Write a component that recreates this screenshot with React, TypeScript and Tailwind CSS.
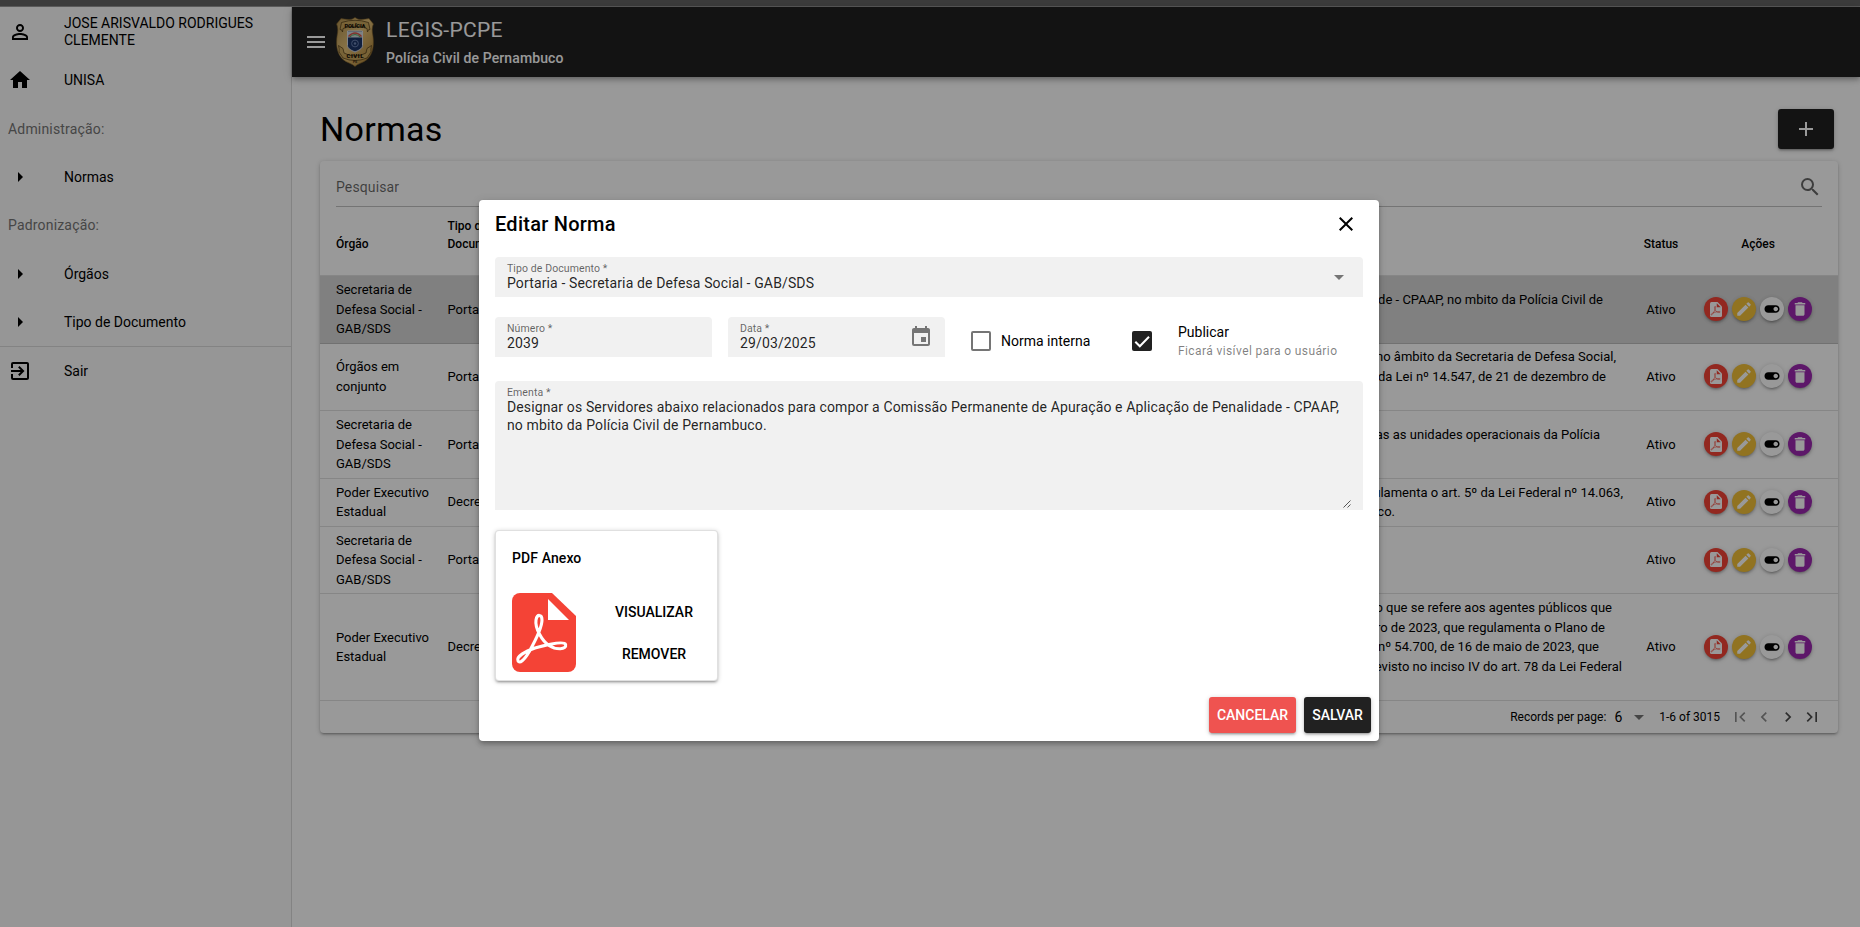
import type { ReactNode } from 'react';
import {
  MdAdd,
  MdArrowDropDown,
  MdArrowRight,
  MdChevronLeft,
  MdChevronRight,
  MdClose,
  MdDelete,
  MdEdit,
  MdEvent,
  MdExitToApp,
  MdFirstPage,
  MdHome,
  MdLastPage,
  MdMenu,
  MdPersonOutline,
  MdSearch,
  MdToggleOn,
} from 'react-icons/md';

function PdfIcon({ className, file, mark }: { className: string; file: string; mark: string }) {
  return (
    <svg viewBox="0 0 64 79" className={className} fill="none">
      <path d="M8 0H40L64 23V71a8 8 0 0 1-8 8H8a8 8 0 0 1-8-8V8a8 8 0 0 1 8-8Z" fill={file} />
      <path d="M36 6V27H57Z" fill={mark} />
      <path
        d="M6 67.8C4 63.5 13 58.5 23 55C34 52 52 47.500 53.6 51.5C55 57 44 57 37 52.5C30 48 22.8 35 24 27C25 20.8 30 21 30 27C30 36 22 50 17 59C12 67.5 7.5 71 6 67.8Z"
        stroke={mark}
        strokeWidth="3.1"
        strokeLinejoin="round"
      />
    </svg>
  );
}

function Crest() {
  return (
    <svg viewBox="0 0 38 50" className="h-[50px] w-[38px] shrink-0">
      <defs>
        <linearGradient id="gold" x1="0" y1="0" x2="1" y2="1">
          <stop offset="0" stopColor="#b08f4e" />
          <stop offset="0.45" stopColor="#e3c078" />
          <stop offset="1" stopColor="#a5782b" />
        </linearGradient>
      </defs>
      <path
        d="M19 .6 22 2.2C26 3 30 2 33 1.6L37.4 7C35.8 11 36 14 36.8 18C38.4 28 37 37 31 42.5C27 46 21.5 46.5 19 49.6C16.500 46.500 11 46 7 42.500C1 37-.4 28 1.200 18C2 14 2.200 11 .6 7L5 1.600C8 2 12 3 16 2.200Z"
        fill="url(#gold)"
        stroke="#7d5f28"
        strokeWidth=".6"
      />
      <path d="M5.500 5.500Q19 1 32.500 5.500L34 12.500Q32 12 31.500 15L31 11.500Q19 7 7 11.500L6.500 15Q6 12 4 12.500Z" fill="#c9a55c" stroke="#4a3614" strokeWidth=".7" />
      <path d="M2.500 28.500 7 31.500 8 36Q19 42 30 36L31 31.500 35.500 28.500Q34.500 32 35 35L31 41Q19 46 7 41L3 35Q3.500 32 2.500 28.500Z" fill="#c9a55c" stroke="#4a3614" strokeWidth=".7" />
      <path d="M11.500 14H26.500V28.500C26.500 32 22 33.500 19 35C16 33.500 11.500 32 11.500 28.500Z" fill="#1c3568" stroke="#d9dde6" strokeWidth="1" />
      <path d="M12 14.500H26V20.500H12Z" fill="#cfd9dd" />
      <path d="M12.500 19.500Q19 12.500 25.500 19.500" fill="none" stroke="#d8564c" strokeWidth="1.400" />
      <path d="M13.500 20.300Q19 14.800 24.500 20.300" fill="none" stroke="#58a560" strokeWidth="1" />
      <circle cx="19" cy="26.500" r="3.400" fill="none" stroke="#6f86b5" strokeWidth=".9" />
      <circle cx="19" cy="26.500" r="1.200" fill="#6f86b5" />
      <text x="19" y="10.600" textAnchor="middle" fontSize="5.800" fontWeight="900" fontFamily="Roboto, sans-serif" fill="#120d04" textLength="21">POLÍCIA</text>
      <text x="19" y="41" textAnchor="middle" fontSize="6" fontWeight="900" fontFamily="Roboto, sans-serif" fill="#120d04" textLength="17">CIVIL</text>
      <text x="19" y="46" textAnchor="middle" fontSize="3.500" fontWeight="900" fontFamily="Roboto, sans-serif" fill="#3c2d10">PE</text>
    </svg>
  );
}

function NavItem({ icon, children }: { icon: ReactNode; children: ReactNode }) {
  return (
    <div className="flex h-12 items-center pl-2">
      <div className="flex w-14 shrink-0 text-[24px] text-black">{icon}</div>
      <div className="w-[215px] leading-[16.8px]">{children}</div>
    </div>
  );
}

function Sidebar() {
  return (
    <nav className="w-[292px] shrink-0 border-r border-[#dadada] bg-[#fafafa] pt-px text-[14px] text-black">
      <NavItem icon={<MdPersonOutline />}>JOSE ARISVALDO RODRIGUES CLEMENTE</NavItem>
      <NavItem icon={<MdHome />}>UNISA</NavItem>
      <div className="flex h-[49px] items-center pt-[2px] pl-2 tracking-[0.0125em] text-[#757575]">Administração:</div>
      <NavItem icon={<MdArrowRight />}>Normas</NavItem>
      <div className="flex h-[49px] items-center pl-2 tracking-[0.0125em] text-[#757575]">Padronização:</div>
      <NavItem icon={<MdArrowRight />}>Órgãos</NavItem>
      <NavItem icon={<MdArrowRight />}>Tipo de Documento</NavItem>
      <div className="h-px bg-[#dadada]" />
      <NavItem icon={<MdExitToApp />}>Sair</NavItem>
    </nav>
  );
}

interface Row {
  orgao: string[];
  tipo: string;
  height: string;
  lines: { text: string; pad: string }[];
  active?: boolean;
}

const SDS = ['Secretaria de', 'Defesa Social -', 'GAB/SDS'];
const PODER = ['Poder Executivo', 'Estadual'];

const rows: Row[] = [
  {
    orgao: SDS,
    tipo: 'Portaria',
    height: 'h-[68px]',
    active: true,
    lines: [
      { text: 'de - CPAAP, no mbito da Polícia Civil de', pad: 'pr-[23px]' },
      { text: '', pad: '' },
    ],
  },
  {
    orgao: ['Órgãos em', 'conjunto'],
    tipo: 'Portaria',
    height: 'h-[67px] pb-px',
    lines: [
      { text: 'no âmbito da Secretaria de Defesa Social,', pad: 'pr-[10px]' },
      { text: 'da Lei nº 14.547, de 21 de dezembro de', pad: 'pr-[20px]' },
      { text: '', pad: '' },
    ],
  },
  {
    orgao: SDS,
    tipo: 'Portaria',
    height: 'h-[68px]',
    lines: [
      { text: 'as as unidades operacionais da Polícia', pad: 'pr-[26px]' },
      { text: '', pad: '' },
    ],
  },
  {
    orgao: PODER,
    tipo: 'Decreto',
    height: 'h-[48px] pb-px',
    lines: [
      { text: 'regulamenta o art. 5º da Lei Federal nº 14.063,', pad: 'pr-[3px]' },
      { text: 'Pernambuco.', pad: 'pr-[231px]' },
    ],
  },
  { orgao: SDS, tipo: 'Portaria', height: 'h-[67px]', lines: [] },
  {
    orgao: PODER,
    tipo: 'Decreto',
    height: 'h-[107px]',
    lines: [
      { text: 'no que se refere aos agentes públicos que', pad: 'pr-[14px]' },
      { text: 'dezembro de 2023, que regulamenta o Plano de', pad: 'pr-[21px]' },
      { text: 'nº 54.700, de 16 de maio de 2023, que', pad: 'pr-[27px]' },
      { text: 'previsto no inciso IV do art. 78 da Lei Federal', pad: 'pr-[4px]' },
      { text: '', pad: '' },
    ],
  },
];

const round =
  'flex size-6 items-center justify-center rounded-full shadow-[0_1px_5px_rgba(0,0,0,0.2),0_2px_2px_rgba(0,0,0,0.14),0_3px_1px_-2px_rgba(0,0,0,0.12)]';

function TableRow({ row }: { row: Row }) {
  return (
    <div className={`flex items-center border-b border-black/12 text-[13px] leading-[19.5px] ${row.height} ${row.active ? 'bg-[#d6d6d6]' : ''}`}>
      <div className="w-[127.5px] shrink-0 pl-4">
        {row.orgao.map((l) => (
          <div key={l} className="whitespace-nowrap">{l}</div>
        ))}
      </div>
      <div className="w-[119.5px] shrink-0">{row.tipo}</div>
      <div className="w-[1059px] shrink-0 text-right whitespace-nowrap">
        {row.lines.map((l, i) => (
          <div key={i} className={`h-[19.5px] ${l.pad}`}>{l.text}</div>
        ))}
      </div>
      <div className="w-[70px] shrink-0 text-center">Ativo</div>
      <div className="mb-px ml-2 flex gap-1">
        <div className={`${round} bg-[#f44336]`}>
          <PdfIcon className="h-[15px] w-3" file="#fff" mark="#f44336" />
        </div>
        <div className={`${round} bg-[#f2c037] text-[18px] text-white`}><MdEdit /></div>
        <div className={`${round} bg-white text-[18px] text-black`}><MdToggleOn /></div>
        <div className={`${round} bg-[#9c27b0] text-[18px] text-white`}><MdDelete /></div>
      </div>
    </div>
  );
}

function MainPage() {
  return (
    <div className="flex min-w-0 flex-1 flex-col">
      <header className="flex h-[70px] shrink-0 items-center bg-[#212121] pl-3 text-white shadow-[0_2px_4px_-1px_rgba(0,0,0,0.2),0_4px_5px_rgba(0,0,0,0.14),0_1px_10px_rgba(0,0,0,0.12)]">
        <MdMenu className="mr-2 size-6" />
        <Crest />
        <div className="ml-3">
          <div className="text-[21px] leading-[30px] tracking-[0.015em]">LEGIS-PCPE</div>
          <div className="mt-[2px] text-[14px] leading-[22px] font-medium tracking-[0.00714em]">Polícia Civil de Pernambuco</div>
        </div>
      </header>
      <main className="flex flex-1 flex-col pt-8 pr-[22px] pl-7">
        <div className="flex h-10 items-center justify-between pr-1">
          <h1 className="text-[34px] leading-10 tracking-[0.00735em]">Normas</h1>
          <button className="flex h-10 w-14 items-center justify-center rounded-[3px] bg-[#212121] text-[24px] text-white shadow-[0_1px_5px_rgba(0,0,0,0.2),0_2px_2px_rgba(0,0,0,0.14),0_3px_1px_-2px_rgba(0,0,0,0.12)]">
            <MdAdd />
          </button>
        </div>
        <section className="mt-3 h-[572px] rounded bg-white shadow-[0_1px_5px_rgba(0,0,0,0.2),0_2px_2px_rgba(0,0,0,0.14),0_3px_1px_-2px_rgba(0,0,0,0.12)]">
          <div className="mx-4 flex h-[46px] items-center justify-between border-b border-black/24 pt-[6px] text-[14px] text-black/60">
            <span className="pt-[2px] tracking-[0.00937em]">Pesquisar</span>
            <MdSearch className="size-6" />
          </div>
          <div className="flex h-[69px] items-center border-b border-black/12 text-[12px] leading-[18px] font-medium">
            <div className="w-[127.5px] shrink-0 pl-4 pt-[5px]">Órgão</div>
            <div className="w-[119.5px] shrink-0 self-start pt-[10px]">Tipo de<br />Documento</div>
            <div className="w-[1059px] shrink-0" />
            <div className="w-[70px] shrink-0 pt-[5px] text-center">Status</div>
            <div className="w-[124px] shrink-0 pt-[5px] text-center">Ações</div>
          </div>
          {rows.map((row, i) => (
            <TableRow key={i} row={row} />
          ))}
          <div className="flex h-8 items-center justify-end pr-[16px] text-[12px]">
            <span>Records per page:</span>
            <span className="ml-2 text-[14px]">6</span>
            <MdArrowDropDown className="ml-[5px] size-6 text-[#757575]" />
            <span className="ml-2">1-6 of 3015</span>
            <MdFirstPage className="ml-[10px] size-5 text-black/45" />
            <MdChevronLeft className="ml-1 size-5 text-black/45" />
            <MdChevronRight className="ml-1 size-5 text-black/70" />
            <MdLastPage className="ml-1 size-5 text-black/70" />
          </div>
        </section>
      </main>
    </div>
  );
}

function Field({ label, value, className, children }: { label: string; value: string; className: string; children?: ReactNode }) {
  return (
    <div className={`flex justify-between rounded-t bg-[#f1f1f1] px-3 ${className}`}>
      <div className="pt-[5px]">
        <div className="h-[12px] text-[10.5px] leading-[14px] tracking-[0.00937em] text-black/60">{label}</div>
        <div className="text-[14px] leading-[18px] tracking-[0.00937em] text-black/87">{value}</div>
      </div>
      {children}
    </div>
  );
}

function EditDialog() {
  return (
    <div className="absolute inset-0 flex items-start justify-center bg-black/40 pt-[193px] pr-[2px]">
      <div className="flex h-[541px] w-[900px] flex-col rounded bg-white shadow-[0_2px_4px_-1px_rgba(0,0,0,0.2),0_4px_5px_rgba(0,0,0,0.14),0_1px_10px_rgba(0,0,0,0.12)]">
        <div className="flex h-[57px] items-center justify-between px-4 pb-[9px]">
          <h2 className="text-[20px] font-medium tracking-[0.0125em]">Editar Norma</h2>
          <MdClose className="mr-[5px] size-6" />
        </div>
        <div className="px-4">
          <Field label="Tipo de Documento *" value="Portaria - Secretaria de Defesa Social - GAB/SDS" className="h-10">
            <MdArrowDropDown className="mt-2 size-6 text-[#757575]" />
          </Field>
          <div className="mt-5 flex h-10">
            <Field label="Número *" value="2039" className="w-[217px]" />
            <Field label="Data *" value="29/03/2025" className="ml-4 w-[217px]">
              <MdEvent className="mt-2 size-6 text-[#757575]" />
            </Field>
            <div className="ml-[26px] flex w-[161px] items-center pt-[8px]">
              <span className="size-5 rounded-[2px] border-2 border-[#757575]" />
              <span className="ml-[10px] text-[14px]">Norma interna</span>
            </div>
            <div className="flex items-center pt-[8px]">
              <span className="flex size-5 items-center justify-center rounded-[2px] bg-[#212121]">
                <svg viewBox="0 0 20 20" className="size-5" fill="none" stroke="#fff" strokeWidth="2">
                  <path d="M3.300 10.700 7.800 15.200 17 5.700" />
                </svg>
              </span>
              <div className="ml-[26px]">
                <div className="pt-px text-[14px] leading-[17px]">Publicar</div>
                <div className="mt-px text-[12px] leading-[18px] tracking-[0.03333em] text-black/50">Ficará visível para o usuário</div>
              </div>
            </div>
          </div>
          <div className="mt-6 flex h-[129px] items-end justify-between rounded-t bg-[#f1f1f1] pr-3 pl-3">
            <div className="self-stretch pt-[5px]">
              <div className="h-[12px] text-[10.5px] leading-[14px] tracking-[0.00937em] text-black/60">Ementa *</div>
              <div className="text-[14px] leading-[18px] tracking-[0.00937em] whitespace-nowrap text-black/87">
                Designar os Servidores abaixo relacionados para compor a Comissão Permanente de Apuração e Aplicação de Penalidade - CPAAP,
                <br />
                no mbito da Polícia Civil de Pernambuco.
              </div>
            </div>
            <svg viewBox="0 0 8 8" className="mb-[2px] -ml-3 size-2 shrink-0" stroke="#444" strokeWidth=".9">
              <path d="M.5 7.500 7.500.5M4.500 7.500 7.500 4.500" />
            </svg>
          </div>
          <div className="mt-5 flex h-[151px] w-[223px] flex-col rounded border border-black/12 bg-white px-4 pt-[16px] shadow-[0_1px_5px_rgba(0,0,0,0.2),0_2px_2px_rgba(0,0,0,0.14),0_3px_1px_-2px_rgba(0,0,0,0.12)]">
            <div className="text-[14px] leading-[22px] font-medium tracking-[0.00714em]">PDF Anexo</div>
            <div className="mt-[24px] flex">
              <PdfIcon className="h-[79px] w-16" file="#f44336" mark="#fff" />
              <div className="ml-[31px] flex w-[94px] flex-col text-center text-[14px] leading-[42px] font-medium">
                <span className="-mt-[2px] h-[42px]">VISUALIZAR</span>
                <span>REMOVER</span>
              </div>
            </div>
          </div>
        </div>
        <div className="mt-4 flex justify-end gap-2 pr-2 text-[14px] font-medium text-white">
          <button className="h-9 w-[87px] rounded-[3px] bg-[#ef5350] shadow-[0_1px_5px_rgba(0,0,0,0.2),0_2px_2px_rgba(0,0,0,0.14),0_3px_1px_-2px_rgba(0,0,0,0.12)]">CANCELAR</button>
          <button className="h-9 w-[67px] rounded-[3px] bg-[#212121] shadow-[0_1px_5px_rgba(0,0,0,0.2),0_2px_2px_rgba(0,0,0,0.14),0_3px_1px_-2px_rgba(0,0,0,0.12)]">SALVAR</button>
        </div>
      </div>
    </div>
  );
}

export default function App() {
  return (
    <div className="flex h-[927px] w-full flex-col overflow-hidden bg-white font-['Roboto',sans-serif] text-black">
      <div className="h-[7px] shrink-0 border-b border-[#5a5a5a] bg-[#3c3c3c]" />
      <div className="relative flex min-h-0 flex-1">
        <Sidebar />
        <MainPage />
        <EditDialog />
      </div>
    </div>
  );
}
